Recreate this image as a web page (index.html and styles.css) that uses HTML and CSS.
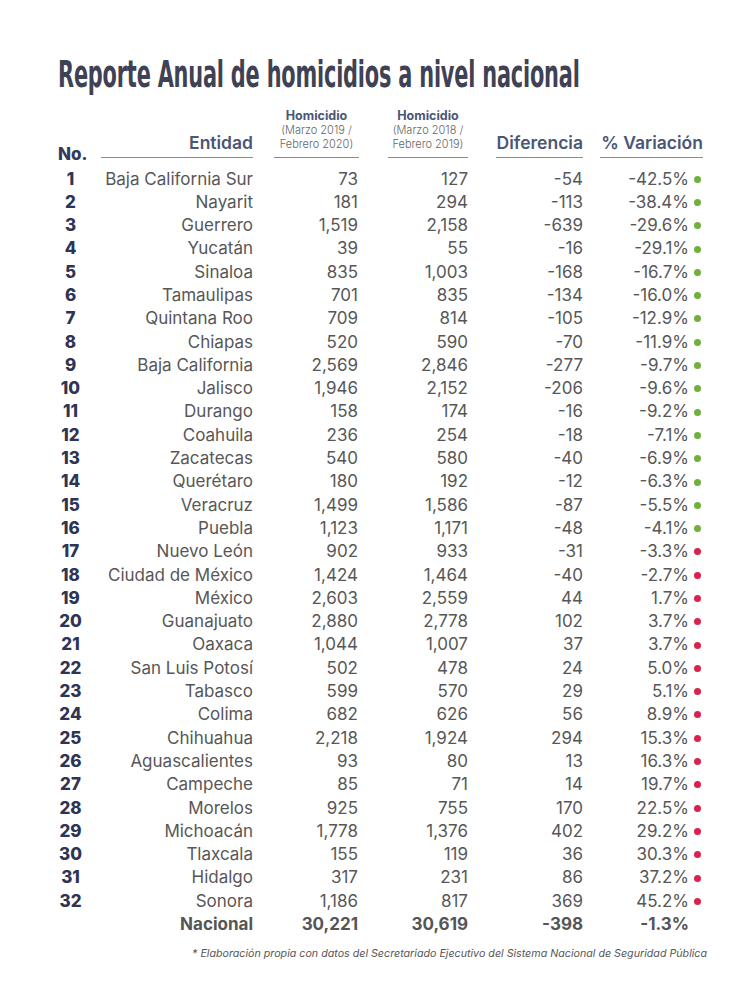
FILE: index.html
```html
<!DOCTYPE html>
<html lang="es">
<head>
<meta charset="utf-8">
<title>Reporte Anual de homicidios</title>
<link rel="stylesheet" href="styles.css">
</head>
<body>
<main class="page">
  <h1 class="title"><span>Reporte Anual de homicidios a nivel nacional</span></h1>
  <div class="table">
    <div class="th th-no">No.</div>
    <div class="th th-ent"><span class="big">Entidad</span></div>
    <div class="th th-h1 th-hom"><span class="hb">Homicidio</span><span class="hs">(Marzo 2019 /<br>Febrero 2020)</span></div>
    <div class="th th-h2 th-hom"><span class="hb">Homicidio</span><span class="hs">(Marzo 2018 /<br>Febrero 2019)</span></div>
    <div class="th th-dif"><span class="big">Diferencia</span></div>
    <div class="th th-var"><span class="big">% Variación</span></div>

    <div class="n">1</div><div class="e">Baja California Sur</div><div class="v">73</div><div class="v">127</div><div class="v">-54</div><div class="p">-42.5%<i class="dot g"></i></div>
    <div class="n">2</div><div class="e">Nayarit</div><div class="v">181</div><div class="v">294</div><div class="v">-113</div><div class="p">-38.4%<i class="dot g"></i></div>
    <div class="n">3</div><div class="e">Guerrero</div><div class="v">1,519</div><div class="v">2,158</div><div class="v">-639</div><div class="p">-29.6%<i class="dot g"></i></div>
    <div class="n">4</div><div class="e">Yucatán</div><div class="v">39</div><div class="v">55</div><div class="v">-16</div><div class="p">-29.1%<i class="dot g"></i></div>
    <div class="n">5</div><div class="e">Sinaloa</div><div class="v">835</div><div class="v">1,003</div><div class="v">-168</div><div class="p">-16.7%<i class="dot g"></i></div>
    <div class="n">6</div><div class="e">Tamaulipas</div><div class="v">701</div><div class="v">835</div><div class="v">-134</div><div class="p">-16.0%<i class="dot g"></i></div>
    <div class="n">7</div><div class="e">Quintana Roo</div><div class="v">709</div><div class="v">814</div><div class="v">-105</div><div class="p">-12.9%<i class="dot g"></i></div>
    <div class="n">8</div><div class="e">Chiapas</div><div class="v">520</div><div class="v">590</div><div class="v">-70</div><div class="p">-11.9%<i class="dot g"></i></div>
    <div class="n">9</div><div class="e">Baja California</div><div class="v">2,569</div><div class="v">2,846</div><div class="v">-277</div><div class="p">-9.7%<i class="dot g"></i></div>
    <div class="n">10</div><div class="e">Jalisco</div><div class="v">1,946</div><div class="v">2,152</div><div class="v">-206</div><div class="p">-9.6%<i class="dot g"></i></div>
    <div class="n">11</div><div class="e">Durango</div><div class="v">158</div><div class="v">174</div><div class="v">-16</div><div class="p">-9.2%<i class="dot g"></i></div>
    <div class="n">12</div><div class="e">Coahuila</div><div class="v">236</div><div class="v">254</div><div class="v">-18</div><div class="p">-7.1%<i class="dot g"></i></div>
    <div class="n">13</div><div class="e">Zacatecas</div><div class="v">540</div><div class="v">580</div><div class="v">-40</div><div class="p">-6.9%<i class="dot g"></i></div>
    <div class="n">14</div><div class="e">Querétaro</div><div class="v">180</div><div class="v">192</div><div class="v">-12</div><div class="p">-6.3%<i class="dot g"></i></div>
    <div class="n">15</div><div class="e">Veracruz</div><div class="v">1,499</div><div class="v">1,586</div><div class="v">-87</div><div class="p">-5.5%<i class="dot g"></i></div>
    <div class="n">16</div><div class="e">Puebla</div><div class="v">1,123</div><div class="v">1,171</div><div class="v">-48</div><div class="p">-4.1%<i class="dot g"></i></div>
    <div class="n">17</div><div class="e">Nuevo León</div><div class="v">902</div><div class="v">933</div><div class="v">-31</div><div class="p">-3.3%<i class="dot r"></i></div>
    <div class="n">18</div><div class="e">Ciudad de México</div><div class="v">1,424</div><div class="v">1,464</div><div class="v">-40</div><div class="p">-2.7%<i class="dot r"></i></div>
    <div class="n">19</div><div class="e">México</div><div class="v">2,603</div><div class="v">2,559</div><div class="v">44</div><div class="p">1.7%<i class="dot r"></i></div>
    <div class="n">20</div><div class="e">Guanajuato</div><div class="v">2,880</div><div class="v">2,778</div><div class="v">102</div><div class="p">3.7%<i class="dot r"></i></div>
    <div class="n">21</div><div class="e">Oaxaca</div><div class="v">1,044</div><div class="v">1,007</div><div class="v">37</div><div class="p">3.7%<i class="dot r"></i></div>
    <div class="n">22</div><div class="e">San Luis Potosí</div><div class="v">502</div><div class="v">478</div><div class="v">24</div><div class="p">5.0%<i class="dot r"></i></div>
    <div class="n">23</div><div class="e">Tabasco</div><div class="v">599</div><div class="v">570</div><div class="v">29</div><div class="p">5.1%<i class="dot r"></i></div>
    <div class="n">24</div><div class="e">Colima</div><div class="v">682</div><div class="v">626</div><div class="v">56</div><div class="p">8.9%<i class="dot r"></i></div>
    <div class="n">25</div><div class="e">Chihuahua</div><div class="v">2,218</div><div class="v">1,924</div><div class="v">294</div><div class="p">15.3%<i class="dot r"></i></div>
    <div class="n">26</div><div class="e">Aguascalientes</div><div class="v">93</div><div class="v">80</div><div class="v">13</div><div class="p">16.3%<i class="dot r"></i></div>
    <div class="n">27</div><div class="e">Campeche</div><div class="v">85</div><div class="v">71</div><div class="v">14</div><div class="p">19.7%<i class="dot r"></i></div>
    <div class="n">28</div><div class="e">Morelos</div><div class="v">925</div><div class="v">755</div><div class="v">170</div><div class="p">22.5%<i class="dot r"></i></div>
    <div class="n">29</div><div class="e">Michoacán</div><div class="v">1,778</div><div class="v">1,376</div><div class="v">402</div><div class="p">29.2%<i class="dot r"></i></div>
    <div class="n">30</div><div class="e">Tlaxcala</div><div class="v">155</div><div class="v">119</div><div class="v">36</div><div class="p">30.3%<i class="dot r"></i></div>
    <div class="n">31</div><div class="e">Hidalgo</div><div class="v">317</div><div class="v">231</div><div class="v">86</div><div class="p">37.2%<i class="dot r"></i></div>
    <div class="n">32</div><div class="e">Sonora</div><div class="v">1,186</div><div class="v">817</div><div class="v">369</div><div class="p">45.2%<i class="dot r"></i></div>

    <div class="n"></div><div class="e tot">Nacional</div><div class="v tot">30,221</div><div class="v tot">30,619</div><div class="v tot">-398</div><div class="p tot">-1.3%<i class="dot none"></i></div>
  </div>
  <p class="note">* Elaboración propia con datos del Secretariado Ejecutivo del Sistema Nacional de Seguridad Pública</p>
</main>
</body>
</html>
```
FILE: styles.css
```css
html, body {
  margin: 0;
  padding: 0;
  background: #ffffff;
}

.page {
  padding: 52px 0 0 58px;
  font-family: "Inter", "Noto Sans", sans-serif;
  color: #575757;
}

.title {
  margin: 0;
  width: 640px;
  height: 44px;
  overflow: hidden;
  font-family: "DejaVu Sans Condensed", "DejaVu Sans", sans-serif;
  font-stretch: condensed;
  font-weight: 700;
  font-size: 38px;
  line-height: 44px;
  color: #3f4155;
  white-space: nowrap;
}

.title span {
  display: inline-block;
  transform: scaleX(0.61);
  transform-origin: left center;
  letter-spacing: -0.3px;
}

.table {
  margin-top: 13px;
  display: grid;
  grid-template-columns: 30px 165px 105px 110px 115px 120px;
  grid-template-rows: auto;
  grid-auto-rows: 23.3px;
  width: 645px;
}

.th {
  grid-row: 1;
  display: flex;
  flex-direction: column;
  justify-content: flex-end;
  align-items: flex-end;
  text-align: right;
  border-bottom: 1.5px solid #8a8a8a;
  padding-bottom: 6px;
  margin-bottom: 9.5px;
  color: #4a5677;
}

.th-no {
  border-bottom: none;
  align-items: flex-start;
  font-size: 17px;
  line-height: 16px;
  font-weight: 800;
  color: #343a5c;
  padding-bottom: 0;
  margin-bottom: 5.5px;
  white-space: nowrap;
}

.th-ent { margin-left: 13px; }
.th-h1 { margin-left: 21px; margin-right: -1px; }
.th-h2 { margin-left: 30px; }
.th-dif { margin-left: 28px; }
.th-var { margin-left: 17px; }

.th-hom {
  align-items: center;
  text-align: center;
}

.big {
  font-size: 17.5px;
  font-weight: 600;
  line-height: 16px;
  white-space: nowrap;
}

.hb {
  font-size: 12.5px;
  font-weight: 700;
  line-height: 14px;
  margin-bottom: 1px;
}

.hs {
  font-size: 11px;
  font-weight: 300;
  line-height: 13.5px;
  color: #666666;
  white-space: nowrap;
}

.n, .e, .v, .p {
  font-size: 17px;
  line-height: 23.3px;
  white-space: nowrap;
}

.n {
  text-align: center;
  padding-right: 5px;
  font-weight: 800;
  color: #2f3454;
}

.e, .v {
  text-align: right;
}

.p {
  display: flex;
  justify-content: flex-end;
  align-items: center;
  padding-right: 2px;
}

.dot {
  display: inline-block;
  width: 7px;
  height: 7px;
  border-radius: 50%;
  margin-left: 5px;
}

.dot.g { background: #72b03c; }
.dot.r { background: #d9224c; }
.dot.none { background: transparent; }

.tot {
  font-weight: 700;
  color: #555555;
}

.note {
  margin: 11px 0 0;
  width: 649px;
  text-align: right;
  font-size: 10.7px;
  line-height: 13px;
  font-style: italic;
  color: #555555;
}
```
